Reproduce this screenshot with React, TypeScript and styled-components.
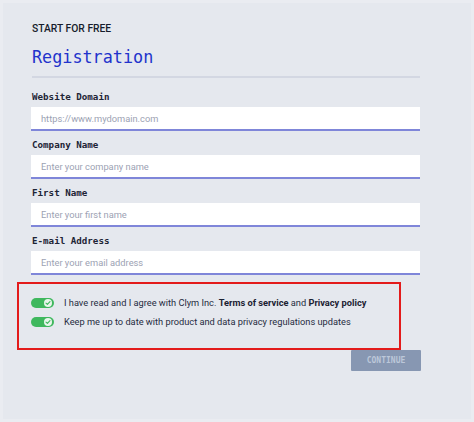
import React from "react";
import styled, { createGlobalStyle } from "styled-components";

const Global = createGlobalStyle`
  html, body {
    margin: 0;
    padding: 0;
    background: #e5e8ee;
  }
  * { box-sizing: border-box; }
`;

const Page = styled.div`
  width: 474px;
  height: 422px;
  background: #e5e8ee;
  box-shadow: inset 0 0 0 3px #eaecf1;
  padding: 22px 0 0 32px;
  font-family: Roboto, "Noto Sans", sans-serif;
`;

const Form = styled.div`
  width: 388px;
  display: flex;
  flex-direction: column;
`;

const Eyebrow = styled.div`
  font-family: Roboto, sans-serif;
  font-weight: 500;
  font-size: 10.3px;
  line-height: 14px;
  color: #161c2c;
`;

const Title = styled.h1`
  margin: 10px 0 0 0;
  font-family: "DejaVu Sans Mono", monospace;
  font-weight: 400;
  font-size: 16.8px;
  line-height: 22px;
  color: #2233cc;
`;

const Divider = styled.div`
  height: 2px;
  margin-top: 8px;
  background: #d3d7e2;
`;

const Label = styled.label<{ $first?: boolean }>`
  display: block;
  margin: ${(p) => (p.$first ? "13px" : "8px")} 0 4px 0;
  font-family: "DejaVu Sans Mono", monospace;
  font-weight: 700;
  font-size: 9.2px;
  line-height: 12px;
  color: #1d2435;
`;

const Input = styled.input`
  display: block;
  width: 389px;
  margin-left: -1px;
  height: 24px;
  border: none;
  border-bottom: 2px solid #7f86d9;
  background: #ffffff;
  padding: 0 0 0 10px;
  font-family: Roboto, sans-serif;
  font-size: 9.3px;
  color: #1d2435;
  outline: none;
  &::placeholder {
    color: #9ca2b3;
  }
`;

const Consent = styled.div`
  margin: 7px 0 0 -15px;
  width: 384px;
  border: 2px solid #e31b1b;
  padding: 13px 0 21px 12px;
  display: flex;
  flex-direction: column;
  gap: 8px;
`;

const Row = styled.div`
  display: flex;
  align-items: center;
  gap: 10px;
  font-family: Roboto, sans-serif;
  font-size: 9.25px;
  line-height: 11px;
  color: #252c3e;
  white-space: nowrap;
`;

const Track = styled.span`
  position: relative;
  display: inline-block;
  width: 23px;
  height: 10px;
  border-radius: 5px;
  background: #3fb85e;
  flex: none;
`;

const Knob = styled.span`
  position: absolute;
  right: 2px;
  top: 1px;
  width: 8px;
  height: 8px;
  border-radius: 50%;
  background: #e9f6ec;
  display: flex;
  align-items: center;
  justify-content: center;
`;

const Strong = styled.b`
  font-weight: 700;
  color: #1b2132;
`;

const Actions = styled.div`
  display: flex;
  justify-content: flex-end;
`;

const Button = styled.button`
  width: 70px;
  height: 21px;
  margin-right: -1px;
  border: none;
  border-radius: 1px;
  background: #8797b2;
  color: #bcc7d9;
  font-family: "DejaVu Sans Mono", monospace;
  font-weight: 700;
  font-size: 8px;
  padding: 0;
`;

const Toggle = () => (
  <Track>
    <Knob>
      <svg width="6" height="6" viewBox="0 0 6 6">
        <path d="M1 3.1 L2.4 4.4 L5 1.6" fill="none" stroke="#3fb85e" strokeWidth="1.1" strokeLinecap="round" strokeLinejoin="round" />
      </svg>
    </Knob>
  </Track>
);

export default function App() {
  return (
    <>
      <Global />
      <Page>
        <Form>
          <Eyebrow>START FOR FREE</Eyebrow>
          <Title>Registration</Title>
          <Divider />
          <Label $first>Website Domain</Label>
          <Input placeholder="https://www.mydomain.com" />
          <Label>Company Name</Label>
          <Input placeholder="Enter your company name" />
          <Label>First Name</Label>
          <Input placeholder="Enter your first name" />
          <Label>E-mail Address</Label>
          <Input placeholder="Enter your email address" />
          <Consent>
            <Row>
              <Toggle />
              <span>
                I have read and I agree with Clym Inc. <Strong>Terms of service</Strong> and{" "}
                <Strong>Privacy policy</Strong>
              </span>
            </Row>
            <Row>
              <Toggle />
              <span>Keep me up to date with product and data privacy regulations updates</span>
            </Row>
          </Consent>
          <Actions>
            <Button>CONTINUE</Button>
          </Actions>
        </Form>
      </Page>
    </>
  );
}
